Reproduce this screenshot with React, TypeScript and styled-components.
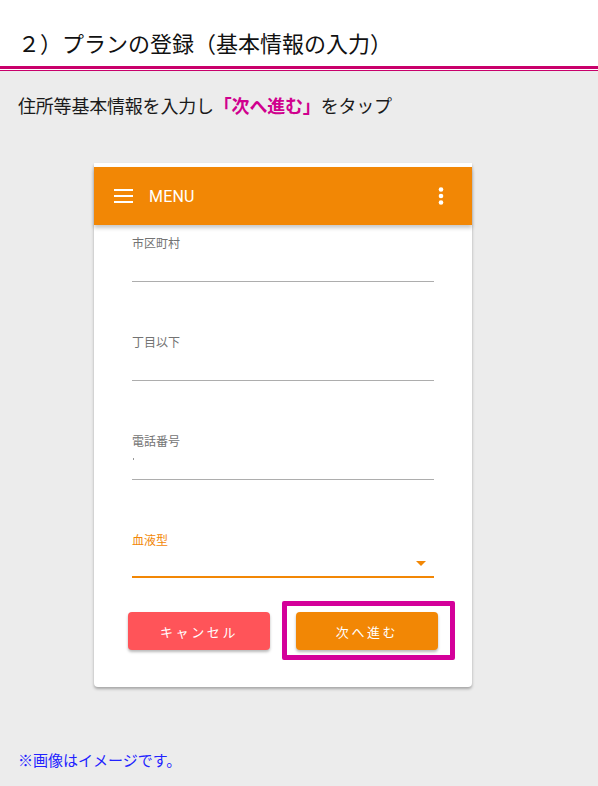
import styled, { createGlobalStyle } from "styled-components";

const GlobalStyle = createGlobalStyle`
  html, body {
    margin: 0;
    padding: 0;
    background: #ececec;
  }
  body {
    font-family: "Noto Sans CJK JP", "Noto Sans", sans-serif;
  }
`;

const Page = styled.div`
  width: 598px;
  min-height: 786px;
  background: #ececec;
`;

const TitleBar = styled.header`
  background: #fff;
  height: 66px;
  box-sizing: border-box;
  padding: 26px 0 0 18px;
`;

const Title = styled.h1`
  margin: 0;
  font-size: 22px;
  line-height: 32px;
  font-weight: 400;
  color: #111;
`;

const Rule = styled.div`
  height: 1px;
  background: #fff;
  border-top: 3px solid #c9006b;
  border-bottom: 1px solid #c9006b;
`;

const Body = styled.main`
  padding: 21px 0 0 18px;
`;

const Lead = styled.p`
  margin: 0;
  font-size: 18px;
  line-height: 26px;
  color: #1a1a1a;
  letter-spacing: -0.2px;
`;

const Accent = styled.strong`
  color: #d0008e;
  font-weight: 700;
`;

const Phone = styled.div`
  width: 378px;
  margin: 45px 0 0 76px;
  background: #fff;
  border-radius: 0 0 4px 4px;
  box-shadow: 0 2px 3px rgba(0, 0, 0, 0.3);
  padding-top: 4px;
  padding-bottom: 37px;
`;

const AppBar = styled.div`
  height: 58px;
  background: #f28705;
  display: flex;
  align-items: center;
  padding: 0 28px 0 20px;
  box-shadow: 0 3px 4px rgba(0, 0, 0, 0.22);
  position: relative;
`;

const MenuLabel = styled.span`
  font-family: Roboto, "Noto Sans", sans-serif;
  font-size: 16px;
  color: #fff;
  margin-left: 16px;
  flex: 1;
  letter-spacing: 0.2px;
`;

const Form = styled.div`
  padding: 10px 38px 0;
`;

const Field = styled.div<{ $active?: boolean }>`
  display: flex;
  flex-direction: column;
  margin-bottom: ${({ $active }) => ($active ? "34px" : "52px")};
  border-bottom: ${({ $active }) =>
    $active ? "2px solid #f28705" : "1px solid #adadad"};
`;

const Label = styled.label<{ $active?: boolean }>`
  font-size: 12px;
  line-height: 16px;
  color: ${({ $active }) => ($active ? "#f28705" : "#737373")};
`;

const InputArea = styled.div<{ $active?: boolean }>`
  height: ${({ $active }) => ($active ? "28px" : "30px")};
  position: relative;
  display: flex;
  align-items: center;
  justify-content: flex-end;
  padding-right: 8px;
`;

const Caret = styled.span`
  width: 0;
  height: 0;
  border-left: 5px solid transparent;
  border-right: 5px solid transparent;
  border-top: 5px solid #f28705;
  margin-top: 2px;
`;

const Speck = styled.span`
  position: absolute;
  left: 1px;
  top: 9px;
  width: 1px;
  height: 2px;
  background: #999;
`;

const Buttons = styled.div`
  display: flex;
  gap: 26px;
  padding-left: 34px;
`;

const Button = styled.button<{ $tone: "cancel" | "next" }>`
  width: 142px;
  height: 38px;
  border: none;
  border-radius: 4px;
  background: ${({ $tone }) => ($tone === "cancel" ? "#ff5459" : "#f28705")};
  color: #fff;
  font-family: "Noto Sans CJK JP", sans-serif;
  font-size: 13px;
  letter-spacing: 2.6px;
  box-shadow: 0 2px 3px rgba(0, 0, 0, 0.28);
  padding: 0;
`;

const Highlight = styled.div`
  position: relative;

  &::after {
    content: "";
    position: absolute;
    top: -11px;
    left: -14px;
    right: -17px;
    bottom: -10px;
    border: 5px solid #d4009a;
    border-radius: 2px;
    pointer-events: none;
  }
`;

const Note = styled.p`
  margin: 62px 0 0;
  font-size: 15px;
  line-height: 22px;
  color: #2222ff;
`;

const Hamburger = () => (
  <svg width="19" height="14" viewBox="0 0 19 14">
    <rect x="0" y="0" width="19" height="2" fill="#fff" />
    <rect x="0" y="6" width="19" height="2" fill="#fff" />
    <rect x="0" y="12" width="19" height="2" fill="#fff" />
  </svg>
);

const Kebab = () => (
  <svg width="6" height="18" viewBox="0 0 6 18">
    <circle cx="3" cy="2.5" r="2.3" fill="#fff" />
    <circle cx="3" cy="9" r="2.3" fill="#fff" />
    <circle cx="3" cy="15.5" r="2.3" fill="#fff" />
  </svg>
);

export default function App() {
  return (
    <Page>
      <GlobalStyle />
      <TitleBar>
        <Title>２）プランの登録（基本情報の入力）</Title>
      </TitleBar>
      <Rule />
      <Body>
        <Lead>
          住所等基本情報を入力し<Accent>「次へ進む」</Accent>をタップ
        </Lead>
        <Phone>
          <AppBar>
            <Hamburger />
            <MenuLabel>MENU</MenuLabel>
            <Kebab />
          </AppBar>
          <Form>
            <Field>
              <Label>市区町村</Label>
              <InputArea />
            </Field>
            <Field>
              <Label>丁目以下</Label>
              <InputArea />
            </Field>
            <Field>
              <Label>電話番号</Label>
              <InputArea>
                <Speck />
              </InputArea>
            </Field>
            <Field $active>
              <Label $active>血液型</Label>
              <InputArea $active>
                <Caret />
              </InputArea>
            </Field>
          </Form>
          <Buttons>
            <Button $tone="cancel">キャンセル</Button>
            <Highlight>
              <Button $tone="next">次へ進む</Button>
            </Highlight>
          </Buttons>
        </Phone>
        <Note>※画像はイメージです。</Note>
      </Body>
    </Page>
  );
}
